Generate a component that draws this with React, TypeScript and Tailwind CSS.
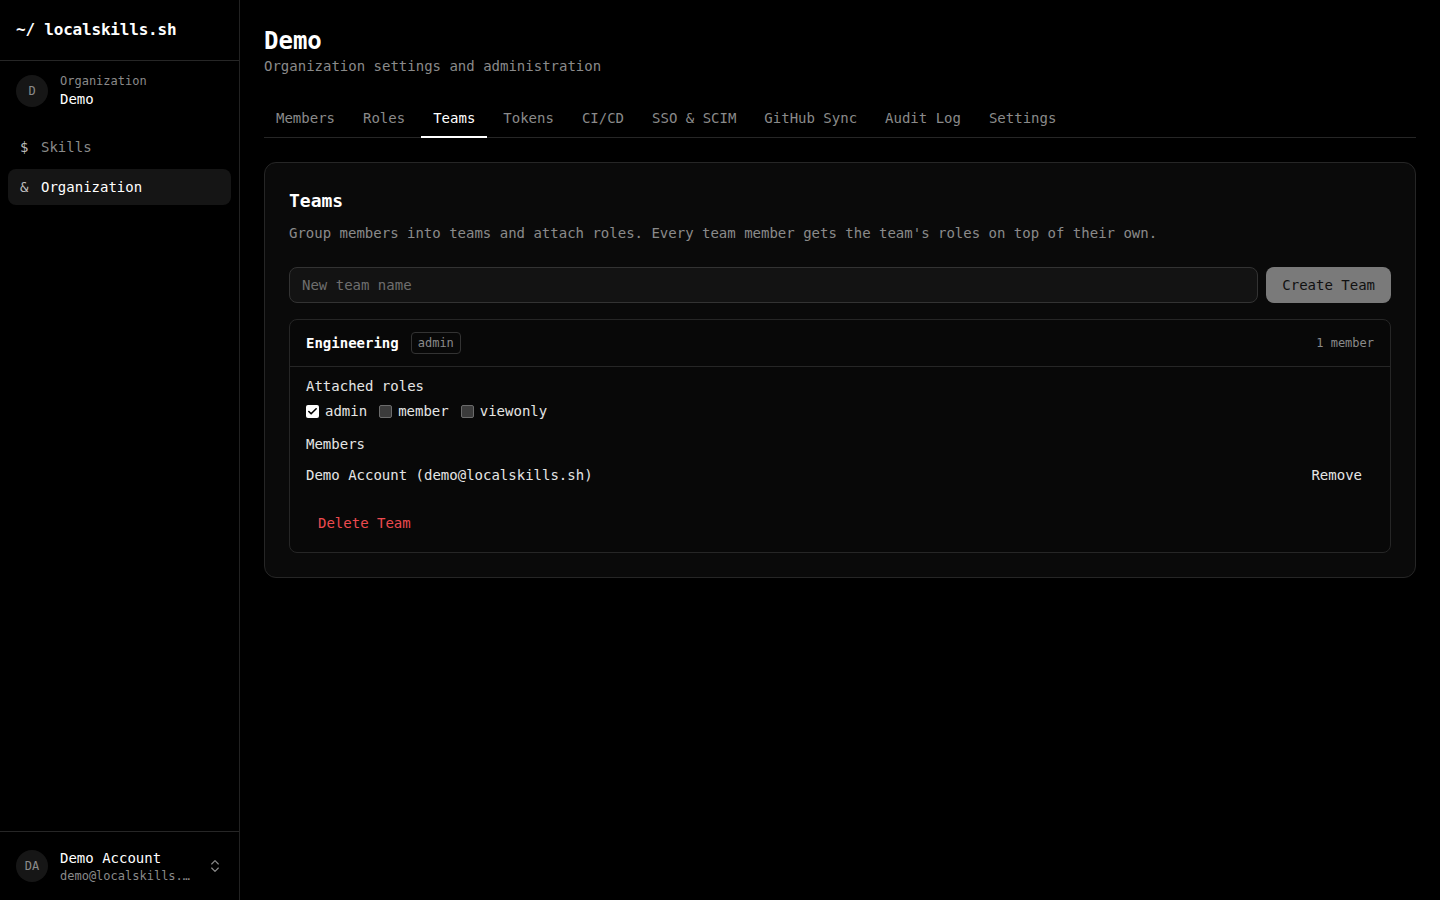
import React from "react";
import { ChevronsUpDown, Check } from "lucide-react";

const tabs = ["Members", "Roles", "Teams", "Tokens", "CI/CD", "SSO & SCIM", "GitHub Sync", "Audit Log", "Settings"];

function Checkbox({ checked, label }: { checked: boolean; label: string }) {
  return (
    <label className="flex items-center gap-1.5">
      {checked ? (
        <span className="flex h-[13px] w-[13px] items-center justify-center rounded-[2px] bg-white">
          <Check className="h-[11px] w-[11px] text-black" strokeWidth={3.5} />
        </span>
      ) : (
        <span className="h-[13px] w-[13px] rounded-[2px] border border-[#6b6b6b] bg-[#3b3b3b]" />
      )}
      <span className="text-[14px] leading-5 text-[#e5e5e5]">{label}</span>
    </label>
  );
}

export default function App() {
  return (
    <div
      className="flex h-[900px] w-[1440px] overflow-hidden bg-black text-white"
      style={{ fontFamily: '"DejaVu Sans Mono", "Liberation Mono", monospace' }}
    >
      {/* Sidebar */}
      <aside className="flex w-[240px] shrink-0 flex-col border-r border-[#222]">
        <div className="flex h-[61px] items-center border-b border-[#262626] px-4">
          <span className="text-[16px] font-bold tracking-[-0.2px] text-white">~/ localskills.sh</span>
        </div>
        <div className="flex h-[60px] items-center gap-3 px-4">
          <div className="flex h-8 w-8 items-center justify-center rounded-full bg-[#161616] text-[12px] text-[#8a8a8a]">D</div>
          <div className="flex flex-col">
            <span className="text-[12px] leading-4 text-[#8a8a8a]">Organization</span>
            <span className="text-[14px] leading-5 font-medium text-white">Demo</span>
          </div>
        </div>
        <nav className="flex flex-col gap-1 p-2">
          <div className="flex h-9 items-center gap-3 rounded-lg px-3 text-[14px]">
            <span className="w-[9px] text-[#bdbdbd]">$</span>
            <span className="text-[#8a8a8a]">Skills</span>
          </div>
          <div className="flex h-9 items-center gap-3 rounded-lg bg-[#151515] px-3 text-[14px]">
            <span className="w-[9px] text-[#bdbdbd]">&amp;</span>
            <span className="text-white">Organization</span>
          </div>
        </nav>
        <div className="mt-auto flex items-center gap-3 border-t border-[#262626] px-4 py-4">
          <div className="flex h-8 w-8 shrink-0 items-center justify-center rounded-full bg-[#161616] text-[12px] text-[#8a8a8a]">DA</div>
          <div className="flex min-w-0 flex-1 flex-col">
            <span className="text-[14px] leading-5 font-medium text-white">Demo Account</span>
            <span className="truncate text-[12px] leading-4 text-[#8a8a8a]">demo@localskills.sh</span>
          </div>
          <ChevronsUpDown className="h-4 w-4 shrink-0 text-[#8a8a8a]" strokeWidth={1.75} />
        </div>
      </aside>

      {/* Main */}
      <main className="flex-1 px-6 pt-[25px]">
        <h1 className="text-[24px] leading-8 font-semibold text-white">Demo</h1>
        <p className="-mt-px text-[14px] leading-5 text-[#8a8a8a]">Organization settings and administration</p>

        <div className="mt-6 flex gap-1 border-b border-[#262626]">
          {tabs.map((t) => (
            <div
              key={t}
              className={
                t === "Teams"
                  ? "-mb-px border-b-2 border-white px-3 pt-2 pb-2 text-[14px] leading-5 text-white"
                  : "-mb-px border-b-2 border-transparent px-3 pt-2 pb-2 text-[14px] leading-5 text-[#8a8a8a]"
              }
            >
              {t}
            </div>
          ))}
        </div>

        <section className="mt-6 rounded-xl border border-[#262626] bg-[#0a0a0a] p-6">
          <h2 className="text-[18px] leading-7 font-semibold text-white">Teams</h2>
          <p className="mt-2 text-[14px] leading-5 text-[#8a8a8a]">
            Group members into teams and attach roles. Every team member gets the team's roles on top of their own.
          </p>

          <div className="mt-6 flex gap-2">
            <div className="flex h-9 flex-1 items-center rounded-lg border border-[#333] bg-[#131313] px-3 text-[14px] text-[#6e6e6e]">
              New team name
            </div>
            <button className="h-9 rounded-lg bg-[#7a7a7a] px-4 text-[14px] font-medium text-[#111]">Create Team</button>
          </div>

          <div className="mt-4 rounded-lg border border-[#262626] bg-[#080808]">
            <div className="flex items-center justify-between border-b border-[#262626] px-4 py-3">
              <div className="flex items-center gap-3">
                <span className="text-[14px] leading-5 font-semibold text-white">Engineering</span>
                <span className="flex h-[22px] items-center rounded-[4px] border border-[#333] px-1.5 text-[12px] text-[#8a8a8a]">admin</span>
              </div>
              <span className="text-[12px] text-[#8a8a8a]">1 member</span>
            </div>
            <div className="px-4 pt-[9px] pb-[13px]">
              <div className="text-[14px] leading-5 font-medium text-[#e5e5e5]">Attached roles</div>
              <div className="mt-[5px] flex items-center gap-3">
                <Checkbox checked label="admin" />
                <Checkbox checked={false} label="member" />
                <Checkbox checked={false} label="viewonly" />
              </div>
              <div className="mt-[13px] text-[14px] leading-5 font-medium text-[#e5e5e5]">Members</div>
              <div className="mt-[5px] flex h-8 items-center justify-between">
                <span className="text-[14px] text-[#e5e5e5]">Demo Account (demo@localskills.sh)</span>
                <button className="h-8 px-3 text-[14px] font-medium text-[#e5e5e5]">Remove</button>
              </div>
              <button className="mt-4 h-8 px-3 text-[14px] font-medium text-[#ec4a4f]">Delete Team</button>
            </div>
          </div>
        </section>
      </main>
    </div>
  );
}
